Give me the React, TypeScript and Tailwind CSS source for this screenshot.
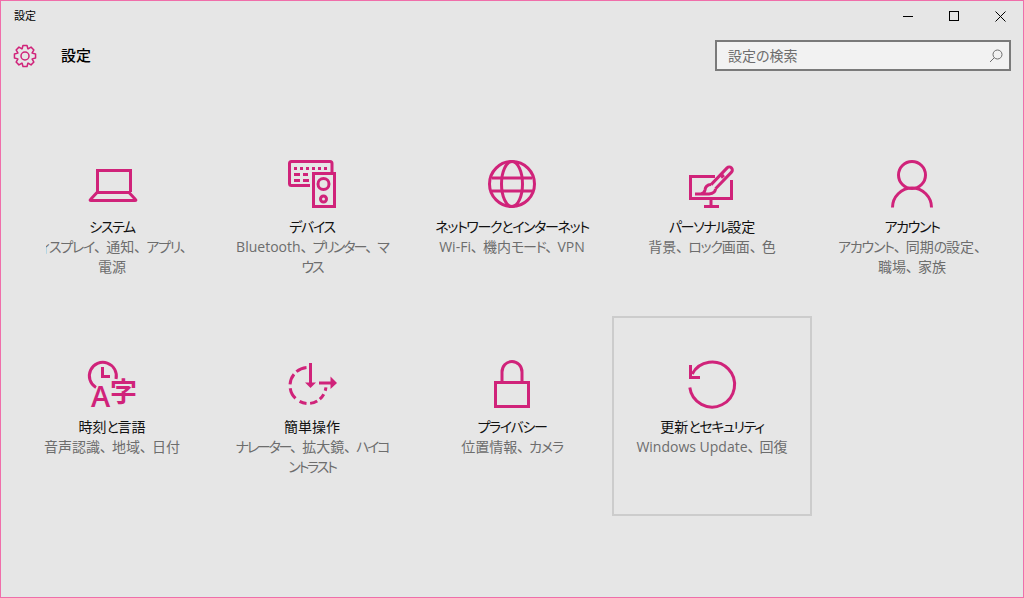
import React from 'react';

const ACCENT = '#d0237a';

const gearPath = (() => {
  // 8 tooth outline around 24,24 in a 48 box
  const pts: string[] = [];
  for (let i = 0; i < 8; i++) {
    const a = (i * Math.PI) / 4 - Math.PI / 2;
    const p = (r: number, d: number) => {
      const x = 24 + r * Math.cos(a + d);
      const y = 24 + r * Math.sin(a + d);
      return `${x.toFixed(2)} ${y.toFixed(2)}`;
    };
    pts.push(`${i === 0 ? 'M' : 'L'}${p(15.5, -0.38)}`, `L${p(21.5, -0.19)}`, `L${p(21.5, 0.19)}`, `L${p(15.5, 0.38)}`);
  }
  return pts.join(' ') + ' Z';
})();

const Svg = ({ children }: { children: React.ReactNode }) => (
  <svg width="48" height="48" viewBox="0 0 48 48" fill="none" stroke={ACCENT} strokeWidth="3" className="shrink-0 overflow-visible">
    {children}
  </svg>
);

const LaptopIcon = () => (
  <Svg>
    <path d="M9.5 32V10.5H42.5V32" />
    <path d="M9 32.5H41L47.5 39.5Q48.5 40.5 47 40.5H3Q1.5 40.5 2.5 39.5Z" />
  </Svg>
);

const DevicesIcon = () => (
  <Svg>
    <path d="M22 25.5H3.5Q1.5 25.5 1.5 23.5V3.5Q1.5 1.5 3.5 1.5H42Q44 1.5 44 3.5V12" />
    <rect x="25.5" y="13.5" width="21" height="33" />
    <circle cx="35.5" cy="24" r="5.5" />
    <circle cx="35.5" cy="39" r="3" />
    <g fill={ACCENT} stroke="none">
      <rect x="6" y="7" width="3" height="3" />
      <rect x="12" y="7" width="3" height="3" />
      <rect x="18" y="7" width="3" height="3" />
      <rect x="24" y="7" width="3" height="3" />
      <rect x="30" y="7" width="3" height="3" />
      <rect x="36" y="7" width="3" height="3" />
      <rect x="6" y="13" width="6" height="3" />
      <rect x="15" y="13" width="5" height="3" />
      <rect x="6" y="19" width="6" height="3" />
      <rect x="15" y="19" width="6" height="3" />
    </g>
  </Svg>
);

const GlobeIcon = () => (
  <Svg>
    <circle cx="24" cy="24" r="22.5" />
    <ellipse cx="24" cy="24" rx="10.5" ry="22.5" />
    <path d="M4 18H44M4 31H44" />
  </Svg>
);

const PersonalizeIcon = () => (
  <Svg>
    <path d="M27 16.5H2.5V38.5H43.5V20" />
    <path d="M23 39V46M16 46.5H31" />
    <path d="M23.1 24.6L39.1 7.9A3 3 0 0 1 43.5 12.1L27.5 28.8" />
    <path d="M7 34H21Q27.5 33.5 27.5 28.8M23.1 24.6Q17.5 25 17 30Q16.5 33 13 34" />
    <path d="M33 17.5L36 15" />
  </Svg>
);

const PersonIcon = () => (
  <Svg>
    <circle cx="24" cy="15" r="13.5" />
    <path d="M4.5 47.5A19.5 19.5 0 0 1 43.5 47.5" />
  </Svg>
);

const TimeLangIcon = () => (
  <Svg>
    <path d="M8 27.5A13.5 13.5 0 1 1 28 19" />
    <path d="M14.5 7V16.5H22" />
    <text x="3" y="47" stroke="none" fill={ACCENT} fontSize="29" fontWeight="600" fontFamily="'Open Sans', sans-serif">A</text>
    <text x="22" y="42" stroke="none" fill={ACCENT} fontSize="27" fontWeight="700" fontFamily="'Noto Sans CJK JP', sans-serif">字</text>
  </Svg>
);

const EaseIcon = () => (
  <Svg>
    <circle cx="20" cy="25.5" r="18" pathLength={360} strokeDasharray="0 6 11 12 20 10 24 12 23 16 37 13 35 11 35 95" />
    <path d="M22.5 3V24" />
    <path d="M17 22.5H28L22.5 28Z" fill={ACCENT} stroke="none" />
    <path d="M31 23H44" />
    <path d="M42.5 16.5L49 23L42.5 29Z" fill={ACCENT} stroke="none" />
  </Svg>
);

const LockIcon = () => (
  <Svg>
    <rect x="7.5" y="22.5" width="33" height="24" />
    <path d="M14 22V12A10 10.5 0 0 1 34 12V22" />
  </Svg>
);

const UpdateIcon = () => (
  <Svg>
    <path d="M4.2 14A22.5 22.5 0 1 1 1.8 27.5" />
    <path d="M2.5 5V17.5H12" />
  </Svg>
);

// Kana run narrower and the comma wider than Noto's proportional metrics
const Runs = ({ text, kana }: { text: string; kana: string }) => (
  <>
    {text.split(/([\u3040-\u30FF]+|、)/).map((part, i) => {
      if (part === '') return null;
      if (part === '、') return <span key={i} className="tracking-[5px]">{part}</span>;
      if (/^[\u3040-\u30FF]/.test(part)) return <span key={i} className={kana}>{part}</span>;
      return <span key={i}>{part}</span>;
    })}
  </>
);

type Item = {
  title: string;
  lines: string[];
  icon: React.ReactNode;
  lineKana?: string;
  clipLeft?: boolean;
  selected?: boolean;
};

const items: Item[] = [
  { title: 'システム', lines: ['ディスプレイ、通知、アプリ、', '電源'], icon: <LaptopIcon />, clipLeft: true },
  { title: 'デバイス', lines: ['Bluetooth、プリンター、マ', 'ウス'], icon: <DevicesIcon />, lineKana: 'tracking-[-2px]' },
  { title: 'ネットワークとインターネット', lines: ['Wi-Fi、機内モード、VPN'], icon: <GlobeIcon /> },
  { title: 'パーソナル設定', lines: ['背景、ロック画面、色'], icon: <PersonalizeIcon /> },
  { title: 'アカウント', lines: ['アカウント、同期の設定、', '職場、家族'], icon: <PersonIcon /> },
  { title: '時刻と言語', lines: ['音声認識、地域、日付'], icon: <TimeLangIcon /> },
  { title: '簡単操作', lines: ['ナレーター、拡大鏡、ハイコ', 'ントラスト'], icon: <EaseIcon />, lineKana: 'tracking-[-2.2px]' },
  { title: 'プライバシー', lines: ['位置情報、カメラ'], icon: <LockIcon /> },
  { title: '更新とセキュリティ', lines: ['Windows Update、回復'], icon: <UpdateIcon />, selected: true },
];

const Tile = ({ item }: { item: Item }) => {
  const kana = item.lineKana ?? 'tracking-[-1.2px]';
  return (
    <div className={`h-[200px] w-[200px] flex flex-col items-center border-2 pt-[42px] ${item.selected ? 'border-[#cccccc]' : 'border-transparent'}`}>
      {item.icon}
      <div className="mt-[8px] h-[21px] leading-[22px] text-[14px] text-[#111111] whitespace-nowrap">
        <Runs text={item.title} kana="tracking-[-1.35px]" />
      </div>
      <div className="w-[152px] text-[14px] leading-[20px] text-[#6d6d6d]">
        {item.lines.map((line, i) =>
          item.clipLeft && i === 0 ? (
            <div key={line} className="ml-[10px] w-[146px] flex justify-end overflow-hidden whitespace-nowrap">
              <span className="shrink-0"><Runs text={line} kana={kana} /></span>
            </div>
          ) : (
            <div key={line} className="flex justify-center whitespace-nowrap">
              <span className="shrink-0"><Runs text={line} kana={kana} /></span>
            </div>
          )
        )}
      </div>
    </div>
  );
};

export default function App() {
  return (
    <div className="w-[1024px] h-[598px] overflow-hidden flex flex-col border border-[#f06eaa] bg-[#e6e6e6] font-['Open_Sans','Noto_Sans_CJK_JP',sans-serif] [font-feature-settings:'palt']">
      {/* title bar */}
      <div className="h-[30px] shrink-0 flex items-center justify-between">
        <span className="ml-[13px] text-[11px] text-black">設定</span>
        <div className="flex h-full text-black">
          <div className="w-[46px] flex items-center justify-center">
            <svg width="10" height="10" viewBox="0 0 10 10" stroke="currentColor" fill="none"><path d="M0 5.5H10" /></svg>
          </div>
          <div className="w-[46px] flex items-center justify-center">
            <svg width="10" height="10" viewBox="0 0 10 10" stroke="currentColor" fill="none"><rect x="0.5" y="0.5" width="9" height="9" /></svg>
          </div>
          <div className="w-[46px] flex items-center justify-center">
            <svg width="11" height="11" viewBox="0 0 11 11" stroke="currentColor" fill="none"><path d="M0.5 0.5L10.5 10.5M10.5 0.5L0.5 10.5" /></svg>
          </div>
        </div>
      </div>

      {/* header */}
      <div className="h-[41px] mt-[4px] shrink-0 flex items-center pl-[12px] pr-[12px]">
        <svg width="24" height="24" viewBox="0 0 48 48" fill="none" stroke={ACCENT} strokeWidth="3" strokeLinejoin="round" className="shrink-0">
          <path d={gearPath} />
          <circle cx="24" cy="24" r="8" />
        </svg>
        <span className="ml-[24px] text-[15px] font-medium text-black">設定</span>
        <div className="ml-auto w-[296px] h-[31px] border-2 border-[#7a7a7a] bg-[#f2f2f2] flex items-center pl-[11px] pr-[6px]">
          <span className="text-[14px] text-[#6d6d6d]">設定の検索</span>
          <svg width="14" height="14" viewBox="0 0 14 14" fill="none" stroke="#6d6d6d" className="ml-auto">
            <circle cx="8.5" cy="5.5" r="4.5" />
            <path d="M5.3 8.7L1 13" />
          </svg>
        </div>
      </div>

      {/* tiles */}
      <div className="mt-[40px] ml-[11px] grid grid-cols-[repeat(5,200px)] auto-rows-[200px]">
        {items.map(item => (
          <Tile key={item.title} item={item} />
        ))}
      </div>
    </div>
  );
}
